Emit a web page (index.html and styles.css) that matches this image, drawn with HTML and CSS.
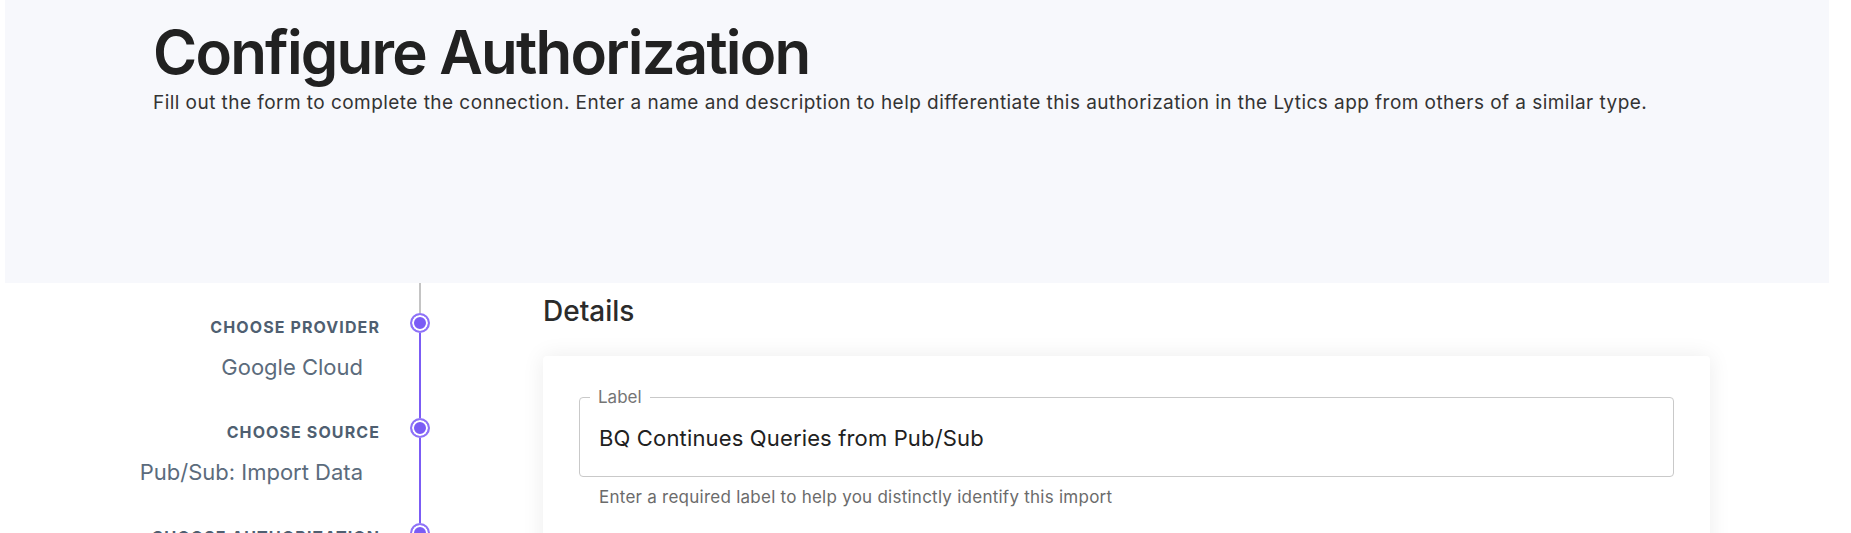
FILE: index.html
```html
<!DOCTYPE html>
<html lang="en">
<head>
<meta charset="utf-8">
<title>Configure Authorization</title>
<link rel="stylesheet" href="styles.css">
</head>
<body>
<div class="page">
  <header class="hero">
    <h1 class="hero-title">Configure Authorization</h1>
    <p class="hero-sub">Fill out the form to complete the connection. Enter a name and description to help differentiate this authorization in the Lytics app from others of a similar type.</p>
  </header>
  <main class="layout">
    <nav class="stepper">
      <div class="step step-first">
        <div class="step-text">
          <div class="step-label">CHOOSE PROVIDER</div>
          <div class="step-value">Google Cloud</div>
        </div>
        <div class="step-track"><span class="seg seg-top"></span><span class="dot"></span><span class="seg seg-bottom"></span></div>
      </div>
      <div class="step">
        <div class="step-text">
          <div class="step-label">CHOOSE SOURCE</div>
          <div class="step-value">Pub/Sub: Import Data</div>
        </div>
        <div class="step-track"><span class="seg seg-top"></span><span class="dot"></span><span class="seg seg-bottom"></span></div>
      </div>
      <div class="step">
        <div class="step-text">
          <div class="step-label">CHOOSE AUTHORIZATION</div>
        </div>
        <div class="step-track"><span class="seg seg-top"></span><span class="dot"></span><span class="seg seg-bottom"></span></div>
      </div>
    </nav>
    <section class="content">
      <h2 class="section-title">Details</h2>
      <div class="card">
        <fieldset class="field">
          <legend class="field-legend">Label</legend>
          <div class="field-value">BQ Continues Queries from Pub/Sub</div>
        </fieldset>
        <p class="helper">Enter a required label to help you distinctly identify this import</p>
      </div>
    </section>
  </main>
</div>
</body>
</html>
```
FILE: styles.css
```css
* { box-sizing: border-box; }

html, body {
  margin: 0;
  padding: 0;
  background: #ffffff;
  font-family: Inter, "Noto Sans", "Liberation Sans", sans-serif;
  overflow: hidden;
}

.page {
  width: 1851px;
}

.hero {
  margin: 0 22px 0 5px;
  height: 283px;
  background: #f7f8fc;
  padding: 16px 0 0 148px;
}

.hero-title {
  margin: 0;
  font-size: 60px;
  line-height: 72px;
  font-weight: 600;
  letter-spacing: -1.8px;
  color: #212121;
}

.hero-sub {
  margin: 3px 0 0;
  font-size: 19px;
  line-height: 24px;
  letter-spacing: 0.45px;
  color: #333333;
}

.layout {
  display: grid;
  grid-template-columns: 440px 1167px;
  column-gap: 103px;
}

.stepper {
  display: flex;
  flex-direction: column;
}

.step {
  display: grid;
  grid-template-columns: 380px 40px;
  column-gap: 20px;
  height: 105px;
}

.step-text {
  padding-top: 34px;
  text-align: right;
}

.step-label {
  font-size: 16px;
  line-height: 20px;
  font-weight: 700;
  letter-spacing: 1.1px;
  color: #4f5f71;
}

.step-value {
  margin-top: 16px;
  padding-right: 17px;
  font-size: 22px;
  line-height: 28px;
  color: #5b6b7c;
}

.step-track {
  display: flex;
  flex-direction: column;
  align-items: center;
}

.seg {
  width: 2px;
  background: #7b5cf5;
}

.seg-top { height: 30px; }
.seg-bottom { flex: 1; }

.step-first .seg-top { background: #c4c4c4; }

.dot {
  flex: none;
  width: 20px;
  height: 20px;
  border-radius: 50%;
  border: 2px solid #8e72f8;
  background: #7b5cf5;
  box-shadow: inset 0 0 0 2px #ffffff;
}

.content {
  padding-top: 10px;
}

.section-title {
  margin: 0 0 27px;
  font-size: 28px;
  line-height: 36px;
  font-weight: 500;
  color: #2b2b2b;
}

.card {
  background: #ffffff;
  border-radius: 4px;
  box-shadow: 0 0 22px rgba(0, 0, 0, 0.08);
  padding: 31px 36px 40px;
  min-height: 300px;
}

.field {
  margin: 0;
  min-width: 0;
  border: 1.5px solid #c9c9c9;
  border-radius: 4px;
  padding: 17px 19px 24px;
}

.field-legend {
  margin-left: -9px;
  padding: 0 8px;
  font-size: 17px;
  line-height: 20px;
  color: #757575;
}

.field-value {
  font-size: 22px;
  line-height: 28px;
  letter-spacing: 0.15px;
  color: #212121;
}

.helper {
  margin: 9px 0 0 20px;
  font-size: 17px;
  line-height: 22px;
  letter-spacing: 0.25px;
  color: #6b6b6b;
}
```
